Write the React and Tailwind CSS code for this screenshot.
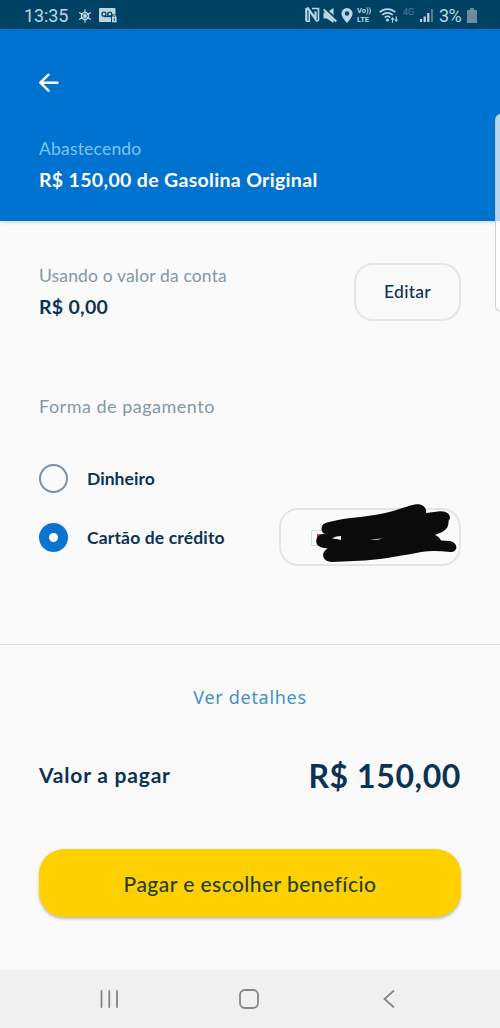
import { useState } from 'react'

const methods = [
  { id: 'cash', label: 'Dinheiro', tracking: 'tracking-[0.05px]' },
  { id: 'card', label: 'Cartão de crédito', tracking: 'tracking-[0.15px]' },
]

function StatusBar() {
  return (
    <div className="h-[29px] shrink-0 bg-[#004263] text-[#b9d6e4] flex items-center justify-between pl-6 pr-[23px] font-['Roboto',sans-serif]">
      <div className="flex items-center">
        <span className="w-[54px] text-[18px] leading-[29px] tracking-[-0.1px] pt-px">13:35</span>
        <svg width="14" height="14" viewBox="0 0 14 14" className="mt-0.5" fill="none" stroke="currentColor">
          <path d="M7 .3v13.4M1 3.500l12 7M1 10.500l12-7" strokeWidth="1.100" />
          <path d="M7 3l3.500 2v4L7 11 3.500 9V5z" strokeWidth="1.300" />
          <circle cx="7" cy="7" r="1.500" fill="currentColor" stroke="none" />
        </svg>
        <svg width="18" height="15" viewBox="0 0 18 15" className="ml-[7px] mt-0.5">
          <rect x="0" y="0" width="16.5" height="14" rx="1" fill="currentColor" />
          <g fill="none" stroke="#004263" strokeWidth="1.3">
            <circle cx="5" cy="6.2" r="2" />
            <circle cx="10.7" cy="6.2" r="2" />
            <path d="M5 8.5h8" />
          </g>
          <rect x="12" y="6.5" width="6" height="8.5" fill="#004263" />
          <rect x="13" y="9" width="4.6" height="5.3" fill="currentColor" />
          <path d="M14 9V7.8h2.6V9" fill="none" stroke="currentColor" />
          <path d="M15.3 10.5v2.3" stroke="#004263" />
        </svg>
      </div>
      <div className="flex items-center pt-px">
        <svg width="15" height="16" viewBox="0 0 15 16" fill="none" stroke="currentColor">
          <path d="M1.300 14V2L3 1.300 10.500 12V4.500" strokeWidth="2.200" />
          <path d="M4.300 4.500v9.700H1M10.300 12.500M7 1.500h6.500v11.500l-2 1.300" strokeWidth="1.600" />
        </svg>
        <svg width="14" height="15" viewBox="0 0 14 15" className="ml-[3px]">
          <path d="M.5 4.500h3.300L10.500 0v15l-6.700-4.500H.5z" fill="currentColor" />
          <path d="M1.500 0 14 12" stroke="#004263" strokeWidth="2" />
          <path d="M.7 1.500 13.300 13.500" stroke="currentColor" strokeWidth="2" />
        </svg>
        <svg width="12" height="15" viewBox="0 0 12 15" className="ml-[4px]">
          <path fillRule="evenodd" d="M6 0a5.600 5.600 0 0 0-5.600 5.600C.4 9.500 6 15 6 15s5.600-5.500 5.600-9.400A5.600 5.600 0 0 0 6 0m0 3.300a2.200 2.200 0 1 1 0 4.400 2.200 2.200 0 0 1 0-4.400" fill="currentColor" />
        </svg>
        <div className="ml-[4px] w-[18px] flex flex-col text-[7.500px] leading-[9px] font-bold whitespace-nowrap">
          <span className="-mt-px">Vo))</span>
          <span>LTE</span>
        </div>
        <svg width="20" height="16" viewBox="0 0 20 16" className="ml-[4px]" fill="none" stroke="currentColor" strokeWidth="1.700">
          <path d="M.8 5.200a11 11 0 0 1 15.400 0M3.200 8a7.600 7.600 0 0 1 10.600 0M5.700 10.500a4 4 0 0 1 5.600 0" />
          <circle cx="8.500" cy="13" r="1.500" fill="currentColor" stroke="none" />
          <path d="M13.500 15.500v-4M17.200 9.500v4" strokeWidth="1.100" />
          <path d="m11.500 12.500 2-2.500 2 2.500zM15.200 12.500l2 2.500 2-2.500z" fill="currentColor" stroke="none" />
        </svg>
        <span className="ml-[4px] w-[15px] text-[9px] leading-3 -mt-1.5 text-[#4f7f98]">4G</span>
        <svg width="14" height="14" viewBox="0 0 14 14" className="ml-[2px]">
          <path d="M1 14v-3M4.700 14V8.500M8.300 14V5" stroke="currentColor" strokeWidth="2.200" />
          <path d="M12 14V1" stroke="#4f7f98" strokeWidth="2" />
        </svg>
        <span className="ml-[5px] w-[27px] text-[18px] leading-5 tracking-[-0.7px] pt-px">3%</span>
        <svg width="10" height="15" viewBox="0 0 10 15" className="ml-px">
          <path d="M0 2h3V0h4v2h3v13H0z" fill="#6e8c99" />
        </svg>
      </div>
    </div>
  )
}

// Freehand marker strokes that hide the card number
function Scribble() {
  return (
    <svg width="150" height="66" viewBox="0 0 150 66" className="absolute left-[29px] -top-[8px]">
      <rect x="1.500" y="28.500" width="15" height="15" rx="1" fill="#fafafa" stroke="#d4dade" />
      <rect x="7" y="32" width="8" height="8" fill="#b7404b" />
      <path
        d="M15 32C10 30 10 22 17 20.500 38 15 54 15.500 73 11.500 86 9 96 4 106 2.300 113 1.500 117 6 116 11L128 9.500C139 8 142 15 138.500 19 139 27 134 30 125 33 128 34 130 36 131 38.500L140 39C149 41 148 50.500 140 50 130 49 121 48.500 111 50 95 53 75 57 55 58.500L22 60C12 60 10 50 18 46.500 9 46 5 43 6.500 37 8 33 11 32.500 15 32Z"
        fill="#0b0b0b"
      />
      <path d="M22 36.500q3-2.500 9-2.500v4q-4-1.500-9-1.500" fill="#f4f5f5" />
      <path d="m60 37 6 .200 7-1.500-5 2.300-3 .200z" fill="#9fb4bf" />
    </svg>
  )
}

function NavBar() {
  return (
    <nav className="h-[58px] shrink-0 bg-[#f0f0f0] flex items-center justify-between pl-[99px] pr-[105px] text-[#858585]">
      <svg width="20" height="20" viewBox="0 0 20 20" fill="none" stroke="currentColor" strokeWidth="1.800" strokeLinecap="round">
        <path d="M2.500 2v16M10.300 2v16M18 2v16" />
      </svg>
      <svg width="20" height="20" viewBox="0 0 20 20" className="-ml-[5px]" fill="none" stroke="currentColor" strokeWidth="1.800">
        <rect x="1" y="1" width="18" height="18" rx="5" />
      </svg>
      <svg width="12" height="20" viewBox="0 0 12 20" fill="none" stroke="currentColor" strokeWidth="1.800" strokeLinecap="round">
        <path d="M10.500 2 1.500 10l9 8" />
      </svg>
    </nav>
  )
}

export default function App() {
  const [method, setMethod] = useState('card')

  return (
    <div className="relative w-[500px] h-[1028px] overflow-hidden flex flex-col bg-[#fafafa] text-[#0b3353] font-['Lato',sans-serif]">
      <StatusBar />

      <header className="h-48 shrink-0 bg-[#0073d1] px-[39px] pt-[44px] shadow-[0_1px_4px_rgba(0,0,0,0.18)]">
        <button className="block" aria-label="Voltar">
          <svg width="20" height="20" viewBox="0 0 20 20" fill="none" stroke="#fff" strokeWidth="2.400" strokeLinecap="round" strokeLinejoin="round">
            <path d="M18.500 9.700H1.500M9.500 1.700 1.300 9.700l8.200 8" />
          </svg>
        </button>
        <p className="mt-[44px] text-[17.500px] leading-6 tracking-[0.2px] text-[#7cc5f2]">Abastecendo</p>
        <h1 className="mt-[5px] text-[19.500px] leading-7 font-bold tracking-[0.33px] text-white whitespace-nowrap">R$ 150,00 de Gasolina Original</h1>
      </header>

      <main className="flex-1 flex flex-col">
        <section className="flex justify-between px-[39px] pt-[42px]">
          <div className="pt-px">
            <p className="text-[17.500px] leading-6 tracking-[0.15px] text-[#8497a5]">Usando o valor da conta</p>
            <p className="mt-[5px] text-[19.500px] leading-7 font-bold tracking-[0.3px]">R$ 0,00</p>
          </div>
          <button className="w-[107px] h-[58px] pt-px rounded-[19px] border-2 border-[#dfe5ec] text-[17.500px] font-medium tracking-[0.25px]">Editar</button>
        </section>

        <section className="px-[39px] mt-[73px]">
          <h2 className="text-[18px] leading-6 tracking-[0.5px] text-[#8497a5]">Forma de pagamento</h2>
          <div className="mt-[31px] flex flex-col gap-px">
            {methods.map(item => (
              <div key={item.id} className="h-[58px] flex items-center justify-between">
                <button className="flex items-center gap-[19px]" onClick={() => setMethod(item.id)}>
                  <span className={`w-[29px] h-[29px] rounded-full grid place-items-center ${method === item.id ? 'bg-[#0b74cf]' : 'border-2 border-[#7c92a3]'}`}>
                    {method === item.id && <span className="w-[9px] h-[9px] rounded-full bg-white" />}
                  </span>
                  <span className={`pt-0.5 text-[17.500px] leading-6 font-bold ${item.tracking}`}>{item.label}</span>
                </button>
                {item.id === 'card' && (
                  <div className="relative w-[182px] h-[58px] rounded-[19px] border-2 border-[#dfe5ec]">
                    <Scribble />
                  </div>
                )}
              </div>
            ))}
          </div>
        </section>

        <section className="mt-[78px] border-t border-[#d9dbdc] px-[39px] flex flex-col">
          <button className="mt-10 self-center text-[18px] leading-6 tracking-[0.7px] text-[#4392c0] font-['Noto_Sans',sans-serif]">Ver detalhes</button>
          <div className="mt-[46px] h-10 flex items-center justify-between">
            <span className="text-[21px] font-bold tracking-[0.8px]">Valor a pagar</span>
            <span className="text-[32px] font-bold tracking-[0.6px] pt-0.5">R$ 150,00</span>
          </div>
          <button className="mt-[54px] h-[68px] rounded-[25px] bg-[#ffd000] text-[21px] font-medium text-[#25402e] tracking-[0.45px] pt-0.5 shadow-[0_2px_3px_rgba(0,0,0,0.25)]">
            Pagar e escolher benefício
          </button>
        </section>
      </main>

      <NavBar />

      {/* edge panel handle over the page */}
      <div className="absolute left-[495px] top-[114px] w-3 h-[198px] rounded-[6px] border border-[#bcc3c8]/80 bg-white/70" />
    </div>
  )
}
